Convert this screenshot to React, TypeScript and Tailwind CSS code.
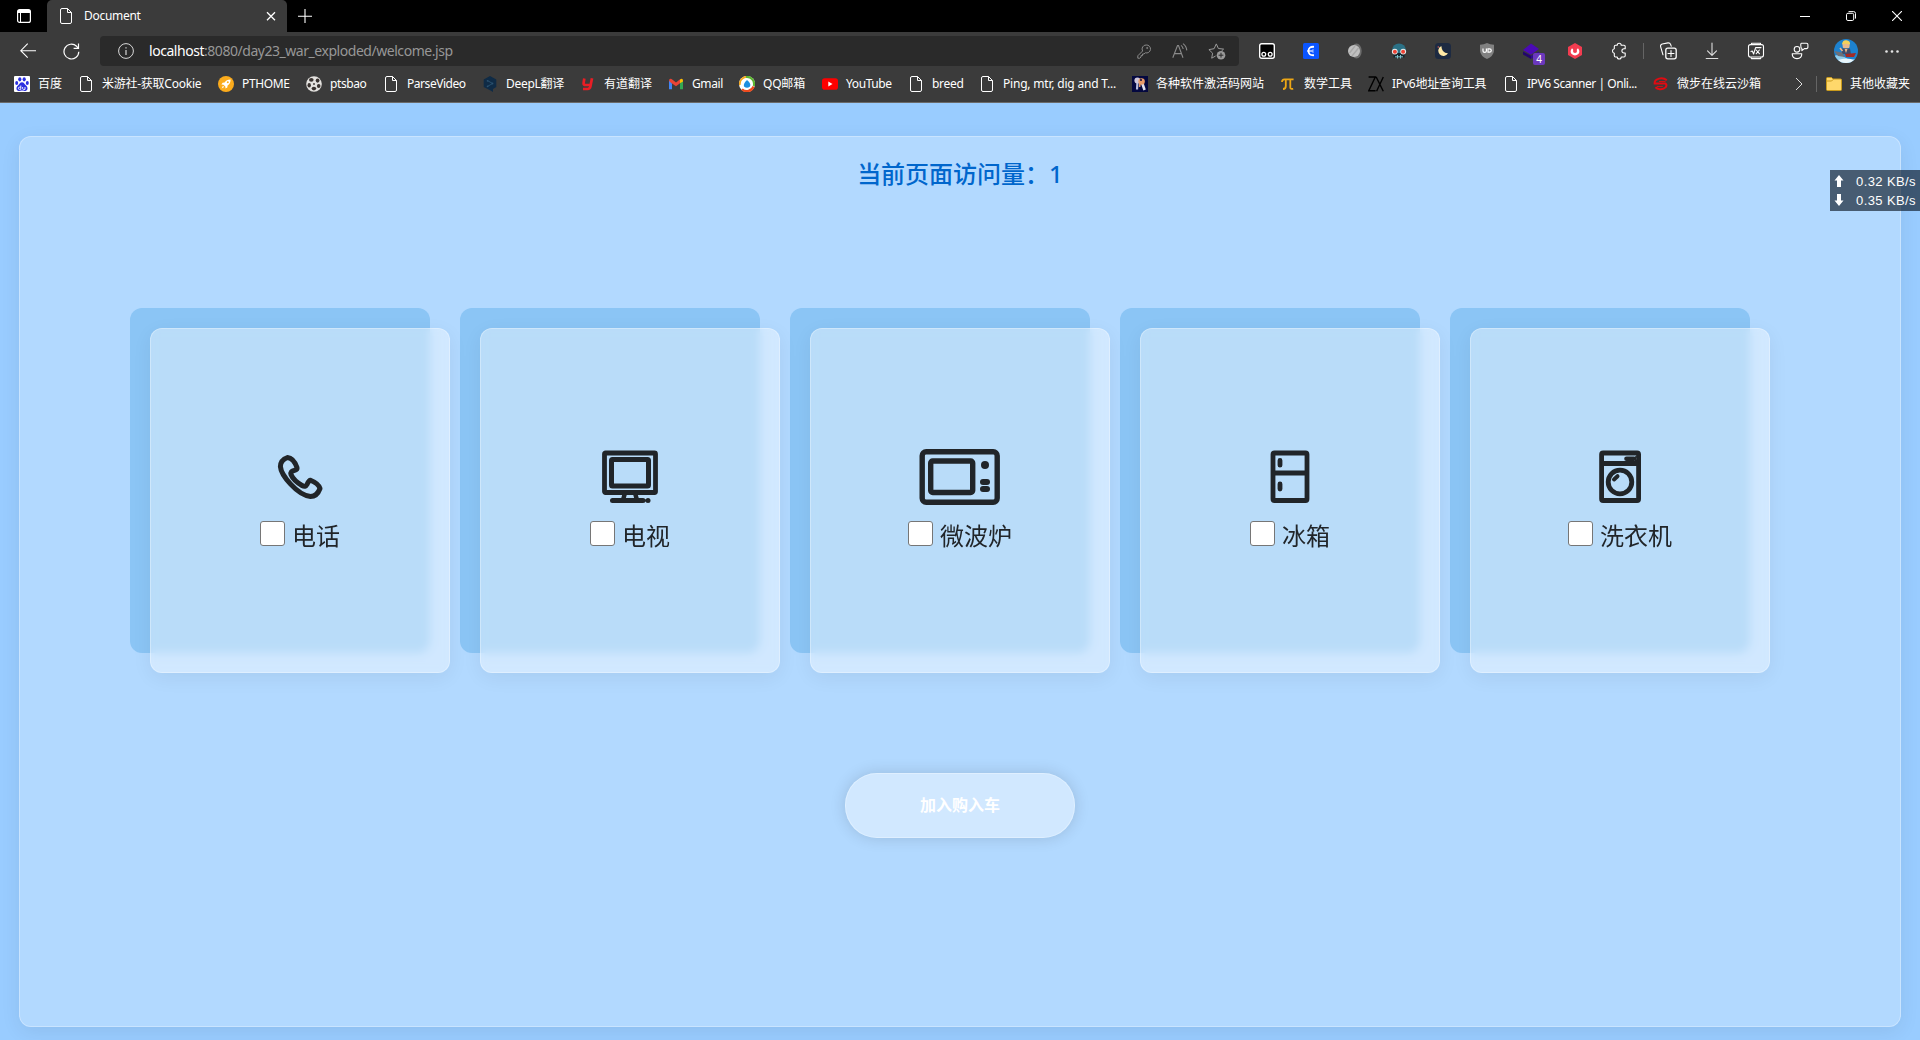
import React from "react";

type P = { children?: React.ReactNode };

const FileIcon = () => (
  <svg width="16" height="16" viewBox="0 0 16 16" fill="none" stroke="#fff" strokeWidth="1" className="shrink-0">
    <path d="M2.5 2Q2.5.5 4 .5H9.5L13.5 4.5V14Q13.5 15.5 12 15.5H4Q2.5 15.5 2.5 14ZM9.5.5V4.5H13.5" />
  </svg>
);

const Svg = ({ children }: P) => (
  <svg width="16" height="16" viewBox="0 0 16 16" className="shrink-0">{children}</svg>
);

const Baidu = () => (
  <Svg>
    <rect width="16" height="16" rx="1" fill="#fff" />
    <g fill="#2b2fe0">
      <ellipse cx="5.8" cy="3.3" rx="1.6" ry="2.1" />
      <ellipse cx="10.2" cy="3.3" rx="1.6" ry="2.1" />
      <ellipse cx="2.7" cy="7" rx="1.5" ry="2" />
      <ellipse cx="13.3" cy="7" rx="1.5" ry="2" />
      <path d="M8 6.2C10 6.2 10.6 8.4 12 9.5C14.6 11.6 13.6 14.8 11.3 14.9C9.5 15 9.2 14.6 8 14.6S6.5 15 4.7 14.9C2.4 14.8 1.4 11.6 4 9.5C5.4 8.4 6 6.2 8 6.2Z" />
    </g>
    <path d="M6.8 9.5V13.4M6.8 11.2H5.4Q4.4 11.2 4.4 12.3T5.4 13.4H6.8M8.6 11V12.6Q8.6 13.4 9.6 13.4H11V11" stroke="#fff" strokeWidth=".9" fill="none" />
  </Svg>
);
const Rocket = () => (
  <Svg>
    <circle cx="8" cy="8" r="8" fill="#fbab1c" />
    <path d="M12.6 3.4C9.5 3.4 7.8 4.6 6.6 6.4L4.6 6.7 3.4 8.5 5.4 8.7 7.3 10.6 7.5 12.6 9.3 11.4 9.6 9.4C11.4 8.2 12.6 6.5 12.6 3.4Z" fill="#fff" />
    <circle cx="9.8" cy="6.2" r="1" fill="#fbab1c" />
    <path d="M4.9 9.8L3.6 12.4 6.2 11.1Z" fill="#fff" />
  </Svg>
);
const Reel = () => (
  <Svg>
    <circle cx="8" cy="8" r="7.8" fill="#e4e2df" />
    <g fill="#3a3330">
      <ellipse cx="5.3" cy="3.8" rx="2.3" ry="1.9" />
      <ellipse cx="11.6" cy="4.6" rx="1.9" ry="2.1" />
      <ellipse cx="3.2" cy="9.3" rx="1.7" ry="2.2" />
      <ellipse cx="12.7" cy="10" rx="1.8" ry="2.1" />
      <ellipse cx="7.9" cy="12.6" rx="2.3" ry="1.8" />
      <circle cx="8" cy="8" r=".9" />
    </g>
  </Svg>
);
const DeepL = () => (
  <Svg>
    <path d="M8 0L14.3 3.6V11L11 13V16L8 14.2 1.7 11V3.6Z" fill="#0f2b46" />
    <path d="M5.5 4.6L10.6 7.5 5.5 10.4" fill="none" stroke="#2b5270" strokeWidth=".9" />
    <circle cx="5.6" cy="4.8" r=".9" fill="#2b5270" /><circle cx="10.5" cy="7.5" r=".9" fill="#2b5270" /><circle cx="5.6" cy="10.3" r=".9" fill="#2b5270" />
  </Svg>
);
const Youdao = () => (
  <Svg>
    <path d="M4.3 2.5L3.6 7.2Q3.4 9 5.4 9H9.7M12 2.3L10.4 10.6Q9.9 13 7.6 13H3" fill="none" stroke="#e81e25" strokeWidth="2.7" />
  </Svg>
);
const Gmail = () => (
  <Svg>
    <path d="M1 4V13.2H4V7.2Z" fill="#4285f4" />
    <path d="M15 4V13.2H12V7.2Z" fill="#34a853" />
    <path d="M1 4.3Q1.3 2 3.6 3L8 6.4 12.4 3 12 7.2 8 10.2 4 7.4Q1 5.8 1 4.3Z" fill="#ea4335" />
    <path d="M12 7.2V3.4Q14.8 1.6 15 4.6V5.4Z" fill="#fbbc04" />
  </Svg>
);
const QQMail = () => (
  <Svg>
    <circle cx="8" cy="8" r="8" fill="#fff" />
    <path d="M.9 9A7.2 7.2 0 0 1 7.5.8" stroke="#f7a81b" strokeWidth="1.8" fill="none" />
    <path d="M7 .9A7.2 7.2 0 0 1 14.8 10" stroke="#5cb531" strokeWidth="2.2" fill="none" />
    <path d="M14.6 10.5A7.2 7.2 0 0 1 3 13.2" stroke="#ee4a1c" strokeWidth="2.2" fill="none" />
    <path d="M8 4Q12.5 7.5 11 10.6 8 13 5 10.6 4 7.5 8 4Z" fill="#1e8fe0" />
  </Svg>
);
const YouTube = () => (
  <Svg>
    <rect x="0" y="2.3" width="16" height="11.4" rx="2.8" fill="#f00" />
    <path d="M6.3 5.5L10.5 8 6.3 10.5Z" fill="#fff" />
  </Svg>
);
const Keys = () => (
  <Svg>
    <rect width="16" height="16" fill="#04083f" />
    <path d="M5.5 6L5 13.5" stroke="#b9bfe0" strokeWidth="2.2" />
    <circle cx="5.4" cy="4.4" r="3" fill="#cfc7da" />
    <path d="M9.8 6L12.6 14" stroke="#dfe1ee" strokeWidth="2.6" />
    <circle cx="9.6" cy="5.4" r="3.2" fill="#e79a68" />
    <circle cx="9" cy="4" r="1" fill="#04083f" />
    <path d="M8 7.5L7.6 11" stroke="#e79a68" strokeWidth="1.6" />
  </Svg>
);
const Pi = () => (
  <Svg>
    <path d="M2 6Q2 3.4 4.5 3.4H13.6M5.8 3.6V10Q5.8 13 3 13M10.3 3.6V11.4Q10.3 13.4 13.2 12.8" fill="none" stroke="#eda716" strokeWidth="1.8" />
  </Svg>
);
const ZX = () => (
  <Svg>
    <path d="M.6 1H7.3L.8 14.8H7.6M8.2 1L15.3 15.2M15.3 1L8.6 15.2" fill="none" stroke="#000" strokeWidth="1.4" />
  </Svg>
);
const SandboxMark = () => (
  <Svg>
    <path d="M13.8 4.2Q10.5 1.4 6 2.6 1.2 4 1.6 7.600H12.500Q14.200 9 12.800 11.200 10.500 13.800 6.500 13.200 4 12.800 2.400 11.200" fill="none" stroke="#e00b12" strokeWidth="2" />
    <path d="M12.500 5.600H6M9.800 10.400H4" stroke="#e00b12" strokeWidth="1" />
  </Svg>
);
const Folder = () => (
  <Svg>
    <path d="M.5 2.5Q.5 1.5 1.5 1.5H5.5L7 3H14.5Q15.5 3 15.5 4V13.5Q15.5 14.5 14.5 14.5H1.5Q.5 14.5 .5 13.5Z" fill="#ffd86b" stroke="#c99a1c" />
    <path d="M1 5H5.6L7.2 3.4" fill="none" stroke="#c99a1c" />
  </Svg>
);

const bookmarks: { icon: React.ReactNode; text: string; slot: string }[] = [
  { icon: <Baidu />, text: "百度", slot: "w-[64px]" },
  { icon: <FileIcon />, text: "米游社-获取Cookie", slot: "w-[140px] tracking-[-0.25px]" },
  { icon: <Rocket />, text: "PTHOME", slot: "w-[88px] tracking-[-0.35px]" },
  { icon: <Reel />, text: "ptsbao", slot: "w-[77px] tracking-[-0.4px]" },
  { icon: <FileIcon />, text: "ParseVideo", slot: "w-[99px] tracking-[-0.45px]" },
  { icon: <DeepL />, text: "DeepL翻译", slot: "w-[98px] tracking-[-0.3px]" },
  { icon: <Youdao />, text: "有道翻译", slot: "w-[88px]" },
  { icon: <Gmail />, text: "Gmail", slot: "w-[71px] tracking-[-0.4px]" },
  { icon: <QQMail />, text: "QQ邮箱", slot: "w-[83px] tracking-[-0.2px]" },
  { icon: <YouTube />, text: "YouTube", slot: "w-[86px] tracking-[-0.4px]" },
  { icon: <FileIcon />, text: "breed", slot: "w-[71px] tracking-[-0.3px]" },
  { icon: <FileIcon />, text: "Ping, mtr, dig and T...", slot: "w-[153px] tracking-[-0.2px]" },
  { icon: <Keys />, text: "各种软件激活码网站", slot: "w-[148px]" },
  { icon: <Pi />, text: "数学工具", slot: "w-[88px]" },
  { icon: <ZX />, text: "IPv6地址查询工具", slot: "w-[135px] tracking-[-0.2px]" },
  { icon: <FileIcon />, text: "IPV6 Scanner | Onli...", slot: "w-[150px] tracking-[-0.45px]" },
  { icon: <SandboxMark />, text: "微步在线云沙箱", slot: "w-[140px]" },
];

const Slot = ({ children }: P) => <div className="relative flex h-full w-11 shrink-0 items-center justify-center">{children}</div>;

const Line = ({ children, color = "#fff" }: P & { color?: string }) => (
  <svg width="18" height="18" viewBox="0 0 18 18" fill="none" stroke={color} strokeWidth="1.1" strokeLinecap="round" strokeLinejoin="round">{children}</svg>
);

function TabBar() {
  return (
    <div className="flex h-8 bg-black">
      <div className="flex w-[47px] items-center justify-center">
        <svg width="14" height="14" viewBox="0 0 14 14" fill="none" stroke="#fff">
          <rect x=".6" y=".6" width="12.8" height="12.8" rx="2" strokeWidth="1.2" />
          <path d="M1 2.5H13" strokeWidth="3" /><path d="M3.5 4V13" />
        </svg>
      </div>
      <div className="flex w-60 items-center rounded-t-[5px] bg-[#3b3b3b] pl-[11px] pr-[10px]">
        <FileIcon />
        <span className="ml-[10px] flex-1 text-[12px] tracking-[-0.3px] text-white">Document</span>
        <svg width="12" height="12" viewBox="0 0 12 12" stroke="#fff" strokeWidth="1.3"><path d="M2 2.2L10 10.2M10 2.2L2 10.2" /></svg>
      </div>
      <div className="flex w-[35px] items-center justify-center">
        <svg width="14" height="14" viewBox="0 0 14 14" stroke="#fff" strokeWidth="1.1"><path d="M7 0V14M0 7.2H14" /></svg>
      </div>
      <div className="ml-auto flex">
        <div className="flex w-[46px] items-center justify-center"><svg width="10" height="10" viewBox="0 0 10 10" stroke="#fff"><path d="M0 5.5H10" /></svg></div>
        <div className="flex w-[46px] items-center justify-center">
          <svg width="10" height="10" viewBox="0 0 10 10" stroke="#fff" fill="none"><rect x=".5" y="2.3" width="7.2" height="7.2" rx="1.4" /><path d="M2.5 .6H7.6Q9.5.6 9.5 2.5V7.6" /></svg>
        </div>
        <div className="flex w-[46px] items-center justify-center"><svg width="10" height="10" viewBox="0 0 10 10" stroke="#fff" strokeWidth="1.1"><path d="M0 0L10 10M10 0L0 10" /></svg></div>
      </div>
    </div>
  );
}

function Toolbar() {
  return (
    <div className="flex h-[38px] items-center bg-[#3b3b3b]">
      <div className="flex w-[100px] items-center pl-5">
        <svg width="16" height="16" viewBox="0 0 16 16" fill="none" stroke="#fff" strokeWidth="1.1"><path d="M16 7.7H.8M7.7.7L.8 7.7 7.7 14.7" /></svg>
        <svg width="17" height="17" viewBox="0 0 17 17" fill="none" stroke="#fff" strokeWidth="1.2" className="ml-[27px]"><path d="M15.8 8.7A7.4 7.4 0 1 1 13.6 3.3L15.4 5.2M15.5.5V5.4H10.6" /></svg>
      </div>
      <div className="flex h-[30px] w-[1139px] items-center rounded bg-[#2a2a2a] pl-[18px]">
        <svg width="16" height="16" viewBox="0 0 16 16" fill="none" stroke="#d8d8d8"><circle cx="8" cy="8" r="7.4" /><path d="M8 7V12M8 4.2V5.4" strokeWidth="1.2" /></svg>
        <span className="ml-[15px] flex-1 text-[14px] leading-[30px] tracking-[-0.46px] text-[#979797]"><span className="text-white">localhost</span>:8080/day23_war_exploded/welcome.jsp</span>
        <div className="flex h-full w-[117px]">
          <div className="flex w-11 items-center justify-center">
            <svg width="14" height="15" viewBox="0 0 14 15" fill="none" stroke="#8a8a8a"><path d="M9.2 1A4 4 0 1 1 8.3 8.8L7 10H5.5V11.6H4V13L2.8 14.2H.8V11.8L5.6 7A4 4 0 0 1 9.2 1Z" /><circle cx="10.2" cy="4" r=".6" /></svg>
          </div>
          <div className="flex w-7 items-center justify-center">
            <svg width="16" height="16" viewBox="0 0 16 16" fill="none" stroke="#8a8a8a" strokeWidth="1.1"><path d="M.8 14.8L5.5 2.6H6.5L11 14.8M2.4 10.6H9.5M9 2.4Q10.8 3.6 11.2 6M11 .6Q14.4 3 14.8 7.4" /></svg>
          </div>
          <div className="flex w-[45px] items-center justify-center">
            <svg width="18" height="17" viewBox="0 0 18 17" fill="none" stroke="#9a9a9a"><path d="M8.3.9L10.4 5.5 15.6 6.1 13.4 8.2M7.6 13L3.7 15.2 4.6 10.2.9 6.6 6.1 5.7 8.3.9" /><circle cx="13" cy="12.2" r="4.3" fill="#9a9a9a" stroke="none" /><path d="M13 9.8V14.6M10.6 12.2H15.4" stroke="#2a2a2a" /></svg>
          </div>
        </div>
      </div>
      <div className="ml-[6px] flex h-full">
        <Slot><Svg><rect x=".7" y=".7" width="14.6" height="14.6" rx="2" fill="#000" stroke="#fff" strokeWidth="1.4" /><g fill="none" stroke="#fff" strokeWidth="1.3"><circle cx="4.8" cy="11.2" r="1.9" /><circle cx="11.2" cy="11.2" r="1.9" /></g></Svg></Slot>
        <Slot><Svg><rect width="16" height="16" rx="1.5" fill="#0a55ff" /><path d="M11 3.8Q5.5 3.4 5.5 8T11 12.2" fill="none" stroke="#fff" strokeWidth="1.8" /><path d="M4 8H10" stroke="#fff" strokeWidth="1.2" /><path d="M10 6V10" stroke="#9dbcff" strokeWidth="1" /></Svg></Slot>
        <Slot><Svg><ellipse cx="9.5" cy="8" rx="5.2" ry="7.6" fill="#6e6e6e" /><circle cx="7" cy="8" r="6" fill="#c0c0c0" /><path d="M2.5 10L8 3M5 13L11.5 5" stroke="#a8a8a8" strokeWidth="1.4" /></Svg></Slot>
        <Slot><Svg><path d="M1 7Q2 .5 8 .5T15 7L13 11H3Z" fill="#2b7186" /><path d="M2.5 10H13.5V14.5H2.5Z" fill="#15252d" /><path d="M4 13.8H12M6.5 12V15.5M9.5 12V15.5" stroke="#7ec0ca" /><circle cx="3.8" cy="8.6" r="2.9" fill="#e9f0ef" /><circle cx="12.2" cy="8.6" r="2.9" fill="#e9f0ef" /><circle cx="3.9" cy="8.8" r="2" fill="#ef4335" /><circle cx="12.1" cy="8.8" r="2" fill="#ef4335" /></Svg></Slot>
        <Slot><Svg><rect width="16" height="16" rx="3.5" fill="#1d2a41" /><path d="M6.3 3A5.2 5.2 0 1 0 13 10.3Q7 10.5 6.3 3Z" fill="#ffe9a6" /><circle cx="3.3" cy="4" r=".8" fill="#d56056" /></Svg></Slot>
        <Slot><Svg><path d="M8 0Q11 1.7 15 1.8V8Q14.5 13 8 16 1.5 13 1 8V1.8Q5 1.7 8 0Z" fill="#818181" /><path d="M4 5.5V8Q4 9.4 5.7 9.4T7.4 8V5.5M9 5.8V9.2H10.5Q12.3 9.2 12.3 7.5T10.5 5.8Z" fill="none" stroke="#fff" strokeWidth="1.2" /></Svg></Slot>
        <Slot>
          <Svg><path d="M0 8.5L8 12.8V16L0 11.5Z" fill="#22056d" /><path d="M8 12.8L16 8.5V11L8 16Z" fill="#2f0b90" /><path d="M8 .4L16 6 8 11.8 0 7Z" fill="#4b0ab5" /></Svg>
          <span className="absolute left-6 top-[21px] flex h-3 w-3 items-center justify-center rounded-[2px] bg-[#6b38bd] text-[10px] leading-3 text-white">4</span>
        </Slot>
        <Slot><Svg><path d="M8 0L15 4V12L8 16 1 12V4Z" fill="#f23c50" /><path d="M5 5.2Q2.6 8 4.4 10.8 8 14 11.6 10.8 13.4 8 11 5.2L8 8.3Z" fill="#fff" /><path d="M5.4 3.5H10.6L8.5 9H7.5Z" fill="#f23c50" /><circle cx="8" cy="8" r="2" fill="#f23c50" /></Svg></Slot>
        <Slot><Line><path d="M7.2 3.3A2 2 0 0 1 11.2 3.3H14Q15.2 3.3 15.2 4.5V6.8H14A2.1 2.1 0 0 0 14 11H15.2V13.8Q15.2 15 14 15H11.2A2 2 0 0 1 7.2 15H5.5Q4.3 15 4.3 13.8V11.3A2.3 2.3 0 0 1 4.3 6.8V4.5Q4.3 3.3 5.5 3.3Z" /></Line></Slot>
      </div>
      <div className="mr-[2px] ml-[2px] h-4 w-px bg-[#656565]" />
      <div className="flex h-full">
        <Slot><Line><rect x="6.8" y="6.2" width="10.4" height="10.6" rx="2" strokeWidth="1.3" /><path d="M12 8.6V14.4M9 11.5H15M4 12.8L1.6 4.6Q1.2 2.6 3.2 2L9 .9Q11 .7 11.6 2.4L12.2 4.2" /></Line></Slot>
        <Slot><Line color="#ddd"><path d="M9 1V13M4.5 8.8L9 13.4 13.5 8.8M3.2 16.5H14.8" /></Line></Slot>
        <Slot><Line><rect x="1.5" y="2.6" width="15" height="12.4" rx="2" /><path d="M4.5 2.4V1.2H13.5V2.4M4 15.6L4.6 16.6H13.4L14 15.6M4 9.6L5.3 9 6.6 12 8.6 5.6H14M9.2 8L12.4 11.6M12.4 8L9.2 11.6" /></Line></Slot>
        <Slot><Line><circle cx="6" cy="7.3" r="2.8" /><path d="M1.2 11.8H10.8Q10.8 16.6 6 16.6T1.2 11.8ZM10.5 1.2H15.5Q16.9 1.2 16.9 2.6V5Q16.9 6.6 15.5 6.6H13.4L10.9 8.6V6.6Q9.6 5.8 9.8 3.6 9.6 1.2 10.5 1.2Z" /></Line></Slot>
        <div className="flex w-12 items-center justify-center">
          <svg width="24" height="24" viewBox="0 0 24 24">
            <defs><clipPath id="avatar"><circle cx="12" cy="12" r="12" /></clipPath></defs>
            <g clipPath="url(#avatar)">
              <rect width="24" height="24" fill="#1d82cf" />
              <path d="M0 17Q6 14 12 19T24 18V24H0Z" fill="#8fcdec" /><path d="M4 21Q12 18 21 21V24H4Z" fill="#e8f5fa" />
              <rect x="8.6" y="2.5" width="7" height="7" rx="2.5" fill="#e9b98c" /><path d="M8 5.5Q8.5 .6 12.5 1.2T16 5.5Q12 3.8 8 5.5Z" fill="#f5d258" />
              <path d="M7.5 9.5H16L17 15H8Z" fill="#3f4d6b" /><path d="M10.6 10L12 14 13.5 10Z" fill="#e9b98c" />
              <path d="M0 12L8 13.5 11 18 4 17Z" fill="#6d7078" /><path d="M11 15L22 14 20 18H12Z" fill="#a32b25" /><path d="M6 9L8.5 12" stroke="#e9b98c" strokeWidth="1.6" />
            </g>
          </svg>
        </div>
        <Slot><svg width="14" height="3" viewBox="0 0 14 3" fill="#e6e6e6"><circle cx="1.5" cy="1.5" r="1.3" /><circle cx="7" cy="1.5" r="1.3" /><circle cx="12.5" cy="1.5" r="1.3" /></svg></Slot>
      </div>
    </div>
  );
}

function BookmarkBar() {
  return (
    <div className="flex h-[33px] items-center border-b border-[#6a6a6a] bg-[#3b3b3b] pl-[14px] pb-[4px] text-[12px] leading-4 text-white">
      {bookmarks.map((b) => (
        <div key={b.text} className={"flex shrink-0 items-center gap-2 whitespace-nowrap " + b.slot}>
          {b.icon}
          <span>{b.text}</span>
        </div>
      ))}
      <svg width="8" height="14" viewBox="0 0 8 14" fill="none" stroke="#ddd" className="ml-[2px]"><path d="M1 1L7 7 1 13" /></svg>
      <div className="ml-[13px] mr-[9px] h-4 w-px bg-[#656565]" />
      <div className="flex shrink-0 items-center gap-2 whitespace-nowrap"><Folder /><span>其他收藏夹</span></div>
    </div>
  );
}

const dark = "#212529";

const PhoneArt = () => (
  <svg width="46" height="46" viewBox="0 0 46 46" fill="none" stroke={dark} strokeWidth="5" strokeLinejoin="round">
    <path d="M10.5 3.5Q3.5 6 3.4 12.5C4 21 20 41 33.5 42.5Q40 42.5 43 34.5Q41.5 29.5 33.5 26.3Q32 26 30 30.5Q28.5 33.5 25 31.5Q16.5 26.5 14 20.5Q13 17.5 17 16.5Q20.5 15.5 20 13.5Q16.5 4 10.5 3.5Z" />
  </svg>
);
const TvArt = () => (
  <svg width="56" height="54" viewBox="0 0 56 54" fill="none" stroke={dark} strokeLinejoin="round">
    <rect x="2.5" y="3" width="51" height="39.5" rx="1" strokeWidth="4.8" />
    <rect x="9.5" y="9.5" width="37" height="26.5" rx="1" strokeWidth="5" />
    <path d="M23 43L21 50M33 43L35 50" strokeWidth="4.5" />
    <path d="M10.5 50.5H41" strokeWidth="5" strokeLinecap="round" />
    <circle cx="46" cy="50.5" r="2.5" fill={dark} stroke="none" />
    <path d="M40 50.5H46" strokeWidth="2" />
  </svg>
);
const MicrowaveArt = () => (
  <svg width="82" height="56" viewBox="0 0 82 56" fill="none" stroke={dark}>
    <rect x="3.2" y="2.7" width="75" height="50.5" rx="4" strokeWidth="5.4" />
    <rect x="11.7" y="12" width="42" height="31.5" rx="2" strokeWidth="5.4" />
    <g fill={dark} stroke="none">
      <circle cx="66" cy="16" r="4" />
      <rect x="61" y="30" width="10" height="6" rx="3" />
      <rect x="61" y="37" width="10" height="6" rx="3" />
    </g>
  </svg>
);
const FridgeArt = () => (
  <svg width="40" height="54" viewBox="0 0 40 54" fill="none" stroke={dark}>
    <rect x="3" y="3" width="34" height="47.5" rx="1.5" strokeWidth="4.8" />
    <path d="M3 23H37" strokeWidth="4.8" />
    <path d="M10 10.5V15.2M10 34V39" strokeWidth="4.8" strokeLinecap="round" />
  </svg>
);
const WasherArt = () => (
  <svg width="42" height="54" viewBox="0 0 42 54" fill="none" stroke={dark}>
    <rect x="2.6" y="3" width="37" height="47.5" rx="1.5" strokeWidth="4.8" />
    <path d="M2.6 13.5H39.4" strokeWidth="4.8" />
    <circle cx="21" cy="32" r="11.8" strokeWidth="4.8" />
    <path d="M15 29.5L18.5 26.2" strokeWidth="4" strokeLinecap="round" />
    <path d="M27.5 8.7H35" strokeWidth="4.6" strokeLinecap="round" />
    <path d="M36 7H38.5M36 10.3H38.5" strokeWidth="1.6" />
  </svg>
);

const products = [
  { name: "电话", art: <PhoneArt /> },
  { name: "电视", art: <TvArt /> },
  { name: "微波炉", art: <MicrowaveArt /> },
  { name: "冰箱", art: <FridgeArt /> },
  { name: "洗衣机", art: <WasherArt /> },
];

function ProductCard({ name, art }: { name: string; art: React.ReactNode }) {
  return (
    <div className="h-[345px] w-[300px] rounded-xl bg-[#8bc5f5]">
      <div className="relative left-5 top-5 flex h-full w-full flex-col items-center rounded-xl border border-white/30 bg-white/40 pt-[119px] shadow-[0_5px_20px_rgba(0,0,0,0.06)] backdrop-blur-[5px]">
        <div className="flex h-[58px] items-center justify-center">{art}</div>
        <label className="mt-[9px] flex h-9 items-center gap-[7px] text-[24px] leading-9 text-[#212529]">
          <input type="checkbox" className="h-[25px] w-[25px] appearance-none rounded-[3px] border border-[#767676] bg-white" />
          <span className="mt-[5px]">{name}</span>
        </label>
      </div>
    </div>
  );
}

export default function App() {
  return (
    <div className="relative flex h-[1040px] w-[1920px] flex-col overflow-hidden bg-[#99ccff] font-['Noto_Sans','Noto_Sans_CJK_SC',sans-serif]">
      <TabBar />
      <Toolbar />
      <BookmarkBar />
      <main className="mx-[19px] mt-[33px] mb-[13px] flex flex-1 flex-col items-center rounded-xl border border-white/30 bg-white/25 shadow-[0_5px_20px_rgba(0,0,0,0.07)]">
        <h1 className="mt-[19px] h-9 text-[24px] leading-9 font-medium text-[#0066cc]">当前页面访问量：1</h1>
        <div className="mt-[116px] mr-[40px] flex gap-[30px]">
          {products.map((p) => <ProductCard key={p.name} {...p} />)}
        </div>
        <button className="mt-[120px] h-[65px] w-[230px] rounded-[32px] border border-white/30 bg-white/40 pb-[1px] text-[16px] font-bold text-white shadow-[0_0_16px_rgba(0,0,0,0.14)]">加入购入车</button>
      </main>
      <div className="absolute right-0 top-[170px] flex h-[41px] w-[90px] flex-col justify-center bg-[#000814]/60 pl-[4px] font-['Liberation_Sans',sans-serif] text-[13px] leading-[19px] text-white">
        {["0.32 KB/s", "0.35 KB/s"].map((s, i) => (
          <div key={s} className="flex items-center">
            <svg width="10" height="12" viewBox="0 0 10 12" fill="#fff" className={i ? "rotate-180" : ""}><path d="M5 0L9.5 5.5H7V12H3V5.5H.5Z" /></svg>
            <span className="ml-[12px] whitespace-nowrap tracking-[0.4px]">{s}</span>
          </div>
        ))}
      </div>
    </div>
  );
}
